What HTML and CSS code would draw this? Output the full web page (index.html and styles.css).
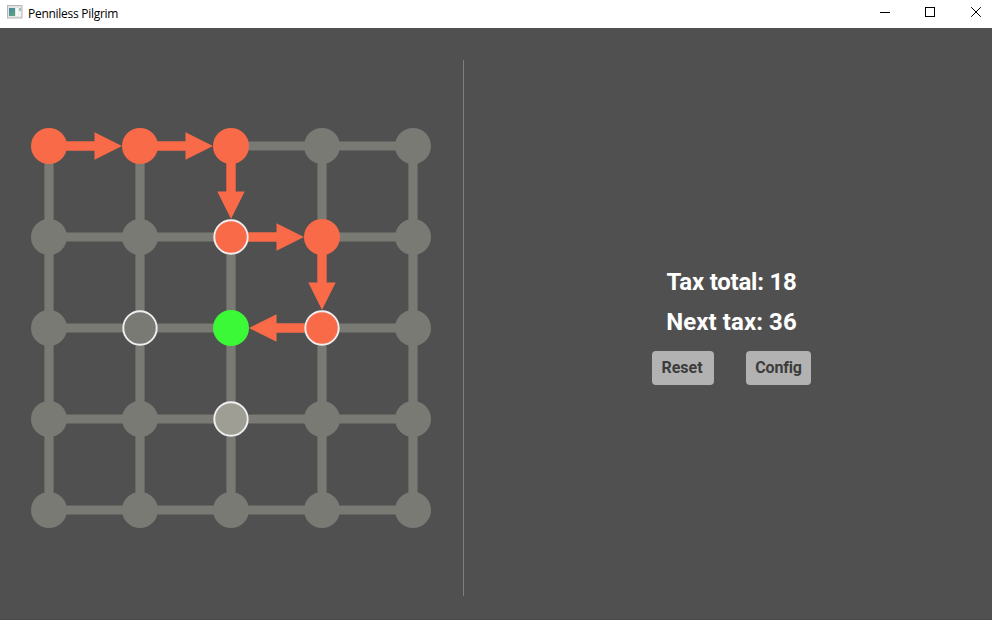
FILE: index.html
```
<!DOCTYPE html>
<html lang="en">
<head>
<meta charset="utf-8">
<title>Penniless Pilgrim</title>
<link rel="stylesheet" href="styles.css">
</head>
<body>
<header class="titlebar">
  <svg class="app-icon" width="16" height="14" viewBox="0 0 16 14">
    <defs><linearGradient id="pane" x1="0" y1="0" x2="0.6" y2="1"><stop offset="0" stop-color="#4b82a8"/><stop offset="1" stop-color="#55a57b"/></linearGradient></defs>
    <rect x=".5" y=".5" width="14.5" height="12.5" fill="#e4e5e7" stroke="#b4b6ba"/>
    <rect x="2" y="3" width="6" height="8" fill="url(#pane)"/>
    <rect x="9" y="3" width="2.5" height="8" fill="#f8f8f8"/>
    <rect x="12" y="3" width="2" height="8" fill="#f4f4f4"/>
    <rect x="12" y="3" width="2" height="3" fill="#9ac4ac"/>
  </svg>
  <h1 class="title">Penniless Pilgrim</h1>
  <svg class="controls" width="112" height="28" viewBox="0 0 112 28" fill="none" stroke="#000">
    <path d="M0 12.5h10M45.5 7.5h9v9h-9z" shape-rendering="crispEdges"/>
    <path d="M91.2 7.2l9.6 9.6M100.8 7.2l-9.6 9.6"/>
  </svg>
</header>
<main class="content">
  <section class="board">
    <svg width="400" height="400" viewBox="31 128 400 400">
      <path class="road" d="M231 146H413M49 237H231M322 237H413M49 328H231M322 328H413M49 419H413M49 510H413M49 146V510M140 146V510M231 237V510M322 146V237M322 328V510M413 146V510"/>
      <g class="node">
        <circle cx="322" cy="146" r="18"/><circle cx="413" cy="146" r="18"/>
        <circle cx="49" cy="237" r="18"/><circle cx="140" cy="237" r="18"/><circle cx="413" cy="237" r="18"/>
        <circle cx="49" cy="328" r="18"/><circle cx="413" cy="328" r="18"/>
        <circle cx="49" cy="419" r="18"/><circle cx="140" cy="419" r="18"/><circle cx="322" cy="419" r="18"/><circle cx="413" cy="419" r="18"/>
        <circle cx="49" cy="510" r="18"/><circle cx="140" cy="510" r="18"/><circle cx="231" cy="510" r="18"/><circle cx="322" cy="510" r="18"/><circle cx="413" cy="510" r="18"/>
      </g>
      <defs><path id="arrow" d="M17-4.7H45.5V-13.7L73 0L45.5 13.7V4.7H17Z"/></defs>
      <g class="visited">
        <use href="#arrow" transform="translate(49 146)"/>
        <use href="#arrow" transform="translate(140 146)"/>
        <use href="#arrow" transform="translate(231 146) rotate(90)"/>
        <use href="#arrow" transform="translate(231 237)"/>
        <use href="#arrow" transform="translate(322 237) rotate(90)"/>
        <use href="#arrow" transform="translate(322 328) rotate(180)"/>
        <circle cx="49" cy="146" r="18"/><circle cx="140" cy="146" r="18"/><circle cx="231" cy="146" r="18"/><circle cx="322" cy="237" r="18"/>
        <circle class="ring" cx="231" cy="237" r="16.7"/>
        <circle class="ring" cx="322" cy="328" r="16.7"/>
      </g>
      <circle class="node ring" cx="140" cy="328" r="16.7"/>
      <circle class="hover ring" cx="231" cy="419" r="16.7"/>
      <circle class="current" cx="231" cy="328" r="18"/>
    </svg>
  </section>
  <div class="divider"></div>
  <section class="panel">
    <p class="stat total">Tax total: 18</p>
    <p class="stat next">Next tax: 36</p>
    <div class="buttons">
      <button class="button reset">Reset</button>
      <button class="button config">Config</button>
    </div>
  </section>
</main>
</body>
</html>
```
FILE: styles.css
```
* { box-sizing: border-box; }
body { margin: 0; height: 620px; overflow: hidden; background: #505050; font-family: Roboto, sans-serif; }
.titlebar { height: 28px; display: flex; align-items: center; padding: 0 0 0 7px; background: #fff; }
.app-icon { margin-top: -4px; }
.title { margin: -2px 0 0 5px; font: 400 12px "Open Sans", "Noto Sans", sans-serif; letter-spacing: -0.28px; color: #000; white-space: nowrap; }
.controls { margin-left: auto; }
.content { display: flex; height: 592px; border-bottom: 1px solid #4b4849; }
.board { width: 463px; padding: 100px 0 0 31px; }
.board svg { display: block; }
.road { stroke: #797a74; stroke-width: 9.2; fill: none; }
.node { fill: #797a74; }
.visited { fill: #f96a48; }
.hover { fill: #9e9e95; }
.current { fill: #3bf936; }
.ring { stroke: #f0eeee; stroke-width: 1.9; }
.divider { width: 1px; height: 536px; margin-top: 32px; background: #7d7d7d; }
.panel { flex: 1; display: flex; flex-direction: column; align-items: center; padding: 234px 0 0 7px; }
.stat { margin: 0; height: 40px; line-height: 40px; font-size: 24px; font-weight: 700; color: #fff; white-space: nowrap; }
.total { letter-spacing: -0.22px; }
.next { letter-spacing: 0.08px; }
.buttons { display: flex; gap: 32px; margin-top: 9px; }
.button { height: 34px; padding: 0 0 1px; border: 0; border-radius: 4px; background: #b2b2b2; color: #3c3c3c; font: 700 16px Roboto, sans-serif; }
.reset { width: 62px; padding-right: 2px; }
.config { width: 65px; letter-spacing: -0.2px; }
```
